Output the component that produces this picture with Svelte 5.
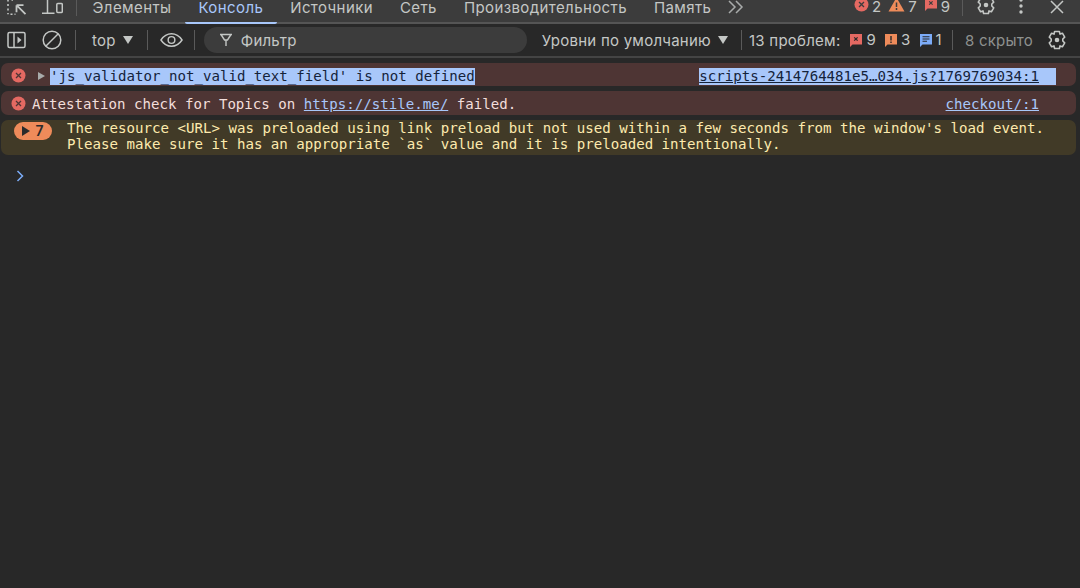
<script>
  const tabs = ['Элементы', 'Консоль', 'Источники', 'Сеть', 'Производительность', 'Память'];
  const active = 'Консоль';
</script>

<main class="devtools">
  <header class="tabbar">
    <div class="tools">
      <svg class="inspect" width="20" height="16" viewBox="0 0 20 16" fill="none" stroke="#c4c7c5" stroke-width="1.6">
        <path d="M1 0v1.500M1 4v2M1 8.500v2M1 13v1.200M3.500 14.200h2M7.500 14.200h1"/>
        <path d="M4.500 0h1.500" />
        <path d="M9.500 5.200h7M9.500 5.200v7M9.500 5.200l9 9" stroke-width="1.800"/>
      </svg>
      <svg class="dev" width="21" height="16" viewBox="0 0 21 16" fill="none" stroke="#c4c7c5" stroke-width="1.500">
        <path d="M5.500 0v13M0 13.200h12.500"/>
        <rect x="14.800" y="3.500" width="5.500" height="9" rx="1"/>
      </svg>
    </div>
    <span class="vsep tabsep"></span>
    <nav class="tabs">
      {#each tabs as t}
        <span class="tab" class:on={t === active}>{t}</span>
      {/each}
      <svg class="more" width="16" height="14" viewBox="0 0 16 14" fill="none" stroke="#a8abaa" stroke-width="1.500">
        <path d="M1 1l6 6-6 6M8 1l6 6-6 6"/>
      </svg>
    </nav>
    <div class="status">
      <span class="stat">
        <svg width="15" height="15" viewBox="0 0 15 15"><circle cx="7.500" cy="7.500" r="7" fill="#e46962"/><path d="M5 5l5 5M10 5l-5 5" stroke="#3c3c3c" stroke-width="1.300"/></svg>2
      </span>
      <span class="stat">
        <svg width="17" height="15" viewBox="0 0 17 15"><path d="M8.500 0.500L16.500 14.500H0.500z" fill="#ee8b5a"/><path d="M8.500 5.500v4.500M8.500 11v2" stroke="#3c3c3c" stroke-width="1.500"/></svg>7
      </span>
      <span class="stat">
        <svg width="14" height="15" viewBox="0 0 14 15"><path d="M1 1h12v10.500H3.500L1 14z" fill="#e46962"/><path d="M5.200 4.300l3.400 3.400M8.600 4.300l-3.400 3.400" stroke="#3c3c3c" stroke-width="1.200"/></svg>9
      </span>
      <span class="vsep"></span>
      <svg class="gear" width="20" height="20" viewBox="0 0 20 20" fill="none" stroke="#c4c7c5" stroke-width="1.600" stroke-linejoin="round">
        <path d="M7.600 1.500h4.800l.6 2.600 2.400-.9 2.300 4-1.900 1.800v2l1.900 1.800-2.300 4-2.400-.9-.6 2.600H7.600L7 15.900l-2.400.9-2.300-4 1.900-1.800v-2L2.300 7.200l2.300-4 2.400.9z"/>
        <circle cx="10" cy="10" r="2.300" fill="#c4c7c5" stroke="none"/>
      </svg>
      <svg class="dots" width="4" height="16" viewBox="0 0 4 16" fill="#c4c7c5"><circle cx="2" cy="2" r="1.700"/><circle cx="2" cy="8" r="1.700"/><circle cx="2" cy="14" r="1.700"/></svg>
      <svg class="close" width="14" height="14" viewBox="0 0 14 14" stroke="#c4c7c5" stroke-width="1.500"><path d="M1 1l12 12M13 1L1 13"/></svg>
    </div>
  </header>

  <div class="toolbar">
    <svg class="sidebar" width="19" height="18" viewBox="0 0 19 18" fill="none" stroke="#c4c7c5" stroke-width="1.500">
      <rect x="1" y="1.500" width="17" height="15" rx="1.500"/><path d="M7 1.500v15"/><path d="M10.500 5.500l4 3.500-4 3.500z" fill="#c4c7c5" stroke="none"/>
    </svg>
    <svg class="clear" width="20" height="20" viewBox="0 0 20 20" fill="none" stroke="#c4c7c5" stroke-width="1.500">
      <circle cx="10" cy="10" r="8.800"/><path d="M4 16L16 4"/>
    </svg>
    <span class="vsep"></span>
    <span class="ctx">top<i class="caret"></i></span>
    <span class="vsep"></span>
    <svg class="eye" width="23" height="16" viewBox="0 0 24 16" fill="none" stroke="#c4c7c5" stroke-width="1.500">
      <path d="M1 8c3-4.500 6.500-6.500 11-6.500S20 3.500 23 8c-3 4.500-6.500 6.500-11 6.500S4 12.500 1 8z"/><circle cx="12" cy="8" r="3.500"/>
    </svg>
    <span class="vsep"></span>
    <div class="filter">
      <svg width="14" height="14" viewBox="0 0 14 14" fill="none" stroke="#c4c7c5" stroke-width="1.400"><path d="M1 1.500h12M2 1.500l3.500 5.500h3L12 1.500M5.500 7h3M7 7v6"/></svg>
      <span>Фильтр</span>
    </div>
    <span class="levels">Уровни по умолчанию<i class="caret"></i></span>
    <span class="vsep"></span>
    <span class="issues">13 проблем:</span>
    <span class="stat iss">
      <svg width="14" height="15" viewBox="0 0 14 15"><path d="M1 1h12v10.500H3.500L1 14z" fill="#e46962"/><path d="M5.200 4.300l3.400 3.400M8.600 4.300l-3.400 3.400" stroke="#282828" stroke-width="1.200"/></svg>9
    </span>
    <span class="stat iss">
      <svg width="14" height="15" viewBox="0 0 14 15"><path d="M1 1h12v10.500H3.500L1 14z" fill="#ee8b5a"/><path d="M7 3v4.500M7 8.500v1.500" stroke="#282828" stroke-width="1.400"/></svg>3
    </span>
    <span class="stat iss last">
      <svg width="14" height="15" viewBox="0 0 14 15"><path d="M1 1h12v10.500H3.500L1 14z" fill="#7cacf8"/><path d="M3.500 3.800h7M3.500 6h7M3.500 8.200h4.500" stroke="#282828" stroke-width="1.100"/></svg>1
    </span>
    <span class="vsep"></span>
    <span class="hidden">8 скрыто</span>
    <svg class="gear-end" width="20" height="20" viewBox="0 0 20 20" fill="none" stroke="#c4c7c5" stroke-width="1.600" stroke-linejoin="round">
      <path d="M7.600 1.500h4.800l.6 2.600 2.400-.9 2.300 4-1.900 1.800v2l1.900 1.800-2.300 4-2.400-.9-.6 2.600H7.600L7 15.900l-2.400.9-2.300-4 1.900-1.800v-2L2.300 7.200l2.300-4 2.400.9z"/>
      <circle cx="10" cy="10" r="2.300" fill="#c4c7c5" stroke="none"/>
    </svg>
  </div>

  <section class="console">
    <div class="msg err first">
      <svg class="x" width="15" height="15" viewBox="0 0 15 15"><circle cx="7.500" cy="7.500" r="7" fill="#e46962"/><path d="M5 5l5 5M10 5l-5 5" stroke="#4e3534" stroke-width="1.300"/></svg>
      <i class="expand"></i>
      <span class="text sel">'js_validator_not_valid_text_field' is not defined</span>
      <span class="src-wrap sel"><a class="src" href="#top">scripts-2414764481e5…034.js?1769769034:1</a></span>
    </div>
    <div class="msg err">
      <svg class="x" width="15" height="15" viewBox="0 0 15 15"><circle cx="7.500" cy="7.500" r="7" fill="#e46962"/><path d="M5 5l5 5M10 5l-5 5" stroke="#4e3534" stroke-width="1.300"/></svg>
      <span class="text">Attestation check for Topics on <a href="#top">https://stile.me/</a> failed.</span>
      <a class="src plain" href="#top">checkout/:1</a>
    </div>
    <div class="msg warn">
      <span class="badge"><i></i>7</span>
      <span class="text">The resource &lt;URL&gt; was preloaded using link preload but not used within a few seconds from the window's load event.<br />Please make sure it has an appropriate `as` value and it is preloaded intentionally.</span>
    </div>
    <svg class="prompt" width="8" height="12" viewBox="0 0 8 12" fill="none" stroke="#7cacf8" stroke-width="1.500"><path d="M1.500 1l5 5-5 5"/></svg>
  </section>
</main>

<style>
:global(body) {
  margin: 0;
  background: #282828;
}

.devtools {
  height: 588px;
  display: flex;
  flex-direction: column;
  overflow: hidden;
  font-family: Inter, "Liberation Sans", sans-serif;
  font-size: 15px;
  color: #c4c7c5;
}

.tabbar {
  height: 24px;
  display: flex;
  align-items: flex-start;
  background: #3c3c3c;
  box-shadow: inset 0 -2px #555;
  flex: none;
}

.tools {
  display: flex;
  align-items: flex-start;
  width: 76px;
  padding-left: 7px;
  box-sizing: border-box;
}

.dev {
  margin-left: 15px;
}

.vsep {
  width: 1px;
  height: 20px;
  background: #5a5a5a;
  flex: none;
}

.tabsep {
  height: 16px;
}

.tabs {
  display: flex;
  align-items: flex-start;
  height: 24px;
  margin-left: 2px;
  flex: 1;
}

.tab {
  padding: 0 13.5px;
  line-height: 16px;
  letter-spacing: 0.4px;
  color: #c4c7c5;
  box-sizing: border-box;
  height: 24px;
  border-bottom: 2px solid transparent;
  white-space: nowrap;
}

.tab.on {
  color: #a8c7fa;
  border-bottom-color: #a8c7fa;
  border-radius: 0 0 2px 2px;
}

.more {
  margin-left: 3px;
  margin-top: 0;
}

.status {
  display: flex;
  align-items: flex-start;
  padding-right: 16px;
}

.stat {
  display: inline-flex;
  align-items: center;
  gap: 3px;
  margin-right: 7px;
  height: 14px;
  line-height: 14px;
}

.status .stat svg {
  margin-top: -6px;
}

.status .vsep {
  height: 16px;
  margin: 0 13px 0 5px;
}

.gear {
  margin-top: -5px;
}

.dots {
  margin: -2px 27px 0 23px;
}

.close {
  margin-top: 0;
}

.toolbar {
  height: 32px;
  display: flex;
  align-items: center;
  background: #282828;
  border-bottom: 2px solid #444;
  flex: none;
  padding-left: 7px;
  letter-spacing: 0.25px;
}

.clear {
  margin: 0 13px 0 16px;
}

.ctx {
  margin: 0 14px 0 16px;
  display: inline-flex;
  align-items: center;
}

.caret {
  display: inline-block;
  width: 0;
  height: 0;
  border-left: 5.500px solid transparent;
  border-right: 5.500px solid transparent;
  border-top: 8px solid #c4c7c5;
  margin-left: 7px;
}

.eye {
  margin: 0 11px 0 12px;
}

.filter {
  margin-left: 9px;
  width: 323px;
  height: 26px;
  border-radius: 13px;
  background: #3c3c3c;
  display: flex;
  align-items: center;
  gap: 8px;
  padding-left: 15px;
  box-sizing: border-box;
}

.levels {
  margin: 0 13px 0 15px;
  display: inline-flex;
  align-items: center;
  white-space: nowrap;
}

.issues {
  margin-left: 7px;
  margin-right: 9px;
  white-space: nowrap;
}

.stat.iss {
  gap: 3px;
  margin-right: 8px;
  height: 16px;
}

.stat.iss.last {
  margin-right: 10px;
}

.hidden {
  margin-left: 12px;
  color: #8e918f;
  white-space: nowrap;
}

.gear-end {
  margin-left: 14px;
}

.console {
  flex: 1;
  padding: 5px 4px 0 1px;
  font-family: "DejaVu Sans Mono", monospace;
  font-size: 14.12px;
  line-height: 16px;
  background: #282828;
}

.msg {
  display: flex;
  align-items: flex-start;
  border-radius: 7px;
  margin-bottom: 5px;
  padding: 5px 0 0;
}

.err {
  background: #4e3534;
  color: #f2dedb;
  height: 19px;
}

.first {
  height: 18px;
}

.x {
  margin: 0 6px 0 10px;
  flex: none;
}

.expand {
  width: 0;
  height: 0;
  border-top: 4.500px solid transparent;
  border-bottom: 4.500px solid transparent;
  border-left: 7px solid #a8abaa;
  margin: 4px 5px 0 6px;
}

.text {
  white-space: pre;
}

.sel {
  display: inline-block;
  height: 17px;
  line-height: 17px;
  background: #a8c7fa;
  color: #15233a;
}

.src-wrap {
  margin-left: auto;
  margin-right: 20px;
  padding-right: 17px;
}

a {
  color: #a8c7fa;
  text-decoration: underline;
}

.src {
  color: #15233a;
}

.src.plain {
  margin-left: auto;
  margin-right: 37px;
  color: #a8c7fa;
}

.warn {
  background: #413a27;
  color: #fdeaae;
  padding: 0 0 3px;
  min-height: 32px;
}

.badge {
  flex: none;
  width: 38px;
  height: 18px;
  margin: 2px 15px 0 13px;
  border-radius: 9px;
  background: #ee8b5a;
  color: #2b2b2b;
  font-family: Inter, sans-serif;
  font-weight: 600;
  font-size: 14px;
  display: inline-flex;
  align-items: center;
  justify-content: center;
  gap: 5px;
}

.badge i {
  width: 0;
  height: 0;
  border-top: 5px solid transparent;
  border-bottom: 5px solid transparent;
  border-left: 8px solid #2b2b2b;
}

.prompt {
  display: block;
  margin: 15px 0 0 15px;
}
</style>
